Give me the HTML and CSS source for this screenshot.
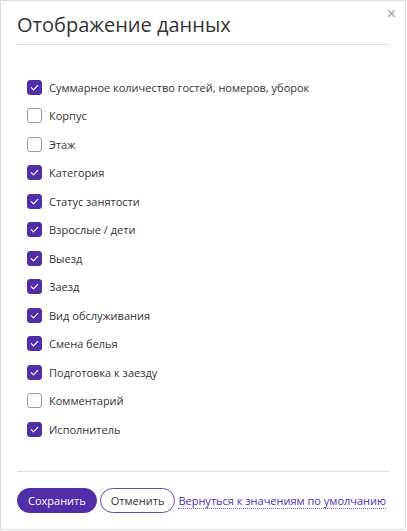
FILE: index.html
```html
<!DOCTYPE html>
<html lang="ru">
<head>
  <meta charset="UTF-8" />
  <meta name="viewport" content="width=device-width, initial-scale=1.0"/>
  <title>Отображение данных</title>
  <link rel="stylesheet" href="styles.css">
</head>
<body>
  <div class="modal">
    <button class="close" aria-label="Закрыть">&times;</button>
    <div class="modal-header">
      <h2>Отображение данных</h2>
    </div>

    <ul class="field-list">
      <li class="on"><span class="box"><svg viewBox="0 0 14 14"><path d="M3.5 7.2l2.4 2.3 4.6-4.8"/></svg></span>Суммарное количество гостей, номеров, уборок</li>
      <li><span class="box"></span>Корпус</li>
      <li><span class="box"></span>Этаж</li>
      <li class="on"><span class="box"><svg viewBox="0 0 14 14"><path d="M3.5 7.2l2.4 2.3 4.6-4.8"/></svg></span>Категория</li>
      <li class="on"><span class="box"><svg viewBox="0 0 14 14"><path d="M3.5 7.2l2.4 2.3 4.6-4.8"/></svg></span>Статус занятости</li>
      <li class="on"><span class="box"><svg viewBox="0 0 14 14"><path d="M3.5 7.2l2.4 2.3 4.6-4.8"/></svg></span>Взрослые / дети</li>
      <li class="on"><span class="box"><svg viewBox="0 0 14 14"><path d="M3.5 7.2l2.4 2.3 4.6-4.8"/></svg></span>Выезд</li>
      <li class="on"><span class="box"><svg viewBox="0 0 14 14"><path d="M3.5 7.2l2.4 2.3 4.6-4.8"/></svg></span>Заезд</li>
      <li class="on"><span class="box"><svg viewBox="0 0 14 14"><path d="M3.5 7.2l2.4 2.3 4.6-4.8"/></svg></span>Вид обслуживания</li>
      <li class="on"><span class="box"><svg viewBox="0 0 14 14"><path d="M3.5 7.2l2.4 2.3 4.6-4.8"/></svg></span>Смена белья</li>
      <li class="on"><span class="box"><svg viewBox="0 0 14 14"><path d="M3.5 7.2l2.4 2.3 4.6-4.8"/></svg></span>Подготовка к заезду</li>
      <li><span class="box"></span>Комментарий</li>
      <li class="on"><span class="box"><svg viewBox="0 0 14 14"><path d="M3.5 7.2l2.4 2.3 4.6-4.8"/></svg></span>Исполнитель</li>
    </ul>

    <div class="modal-footer">
      <button class="btn btn-primary">Сохранить</button>
      <button class="btn btn-outline">Отменить</button>
      <a href="#" class="reset-link">Вернуться к значениям по умолчанию</a>
    </div>
  </div>
</body>
</html>
```

FILE: styles.css
```css
body {
  font-family: 'Open Sans', 'Noto Sans', sans-serif;
  background-color: #ffffff;
  margin: 0;
  padding: 0;
}

.modal {
  position: relative;
  box-sizing: border-box;
  width: 406px;
  height: 530px;
  border: 1px solid #dedede;
  background-color: #ffffff;
}

.close {
  position: absolute;
  top: 5px;
  right: 9px;
  background: none;
  border: none;
  padding: 0;
  color: #a0a0a0;
  font-size: 16px;
  line-height: 16px;
  cursor: pointer;
}

.modal-header {
  margin: 0 16px;
  padding-top: 10px;
  padding-bottom: 5px;
  border-bottom: 1px solid #dcdcdc;
}

.modal-header h2 {
  margin: 0;
  font-size: 20px;
  font-weight: 400;
  line-height: 28px;
  color: #333333;
}

.field-list {
  list-style: none;
  margin: 0;
  padding: 28px 0 0 26px;
}

.field-list li {
  display: flex;
  align-items: center;
  gap: 7px;
  height: 28.5px;
  font-size: 11px;
  color: #333333;
}

.box {
  box-sizing: border-box;
  width: 15px;
  height: 15px;
  border: 1px solid #9a9a9a;
  border-radius: 3px;
  background-color: #ffffff;
  flex-shrink: 0;
}

.field-list li.on .box {
  border-color: #512da8;
  background-color: #512da8;
}

.box svg {
  display: block;
  width: 13px;
  height: 13px;
  fill: none;
  stroke: #ffffff;
  stroke-width: 1.3;
  stroke-linecap: round;
  stroke-linejoin: round;
}

.modal-footer {
  display: flex;
  align-items: center;
  gap: 3px;
  margin: 27px 16px 0;
  padding-top: 16px;
  border-top: 1px solid #dcdcdc;
}

.btn {
  box-sizing: border-box;
  height: 25px;
  padding: 0 10px;
  border-radius: 13px;
  font-family: 'Open Sans', 'Noto Sans', sans-serif;
  font-size: 11px;
  cursor: pointer;
}

.btn-primary {
  background-color: #512da8;
  border: 1px solid #512da8;
  color: #ffffff;
}

.btn-outline {
  background-color: #ffffff;
  border: 1px solid #6a48b8;
  color: #333333;
}

.reset-link {
  font-size: 11px;
  white-space: nowrap;
  color: #512da8;
  text-decoration: none;
  border-bottom: 1px dotted #7e5cc4;
  line-height: 14px;
  margin-top: 2px;
}
```
